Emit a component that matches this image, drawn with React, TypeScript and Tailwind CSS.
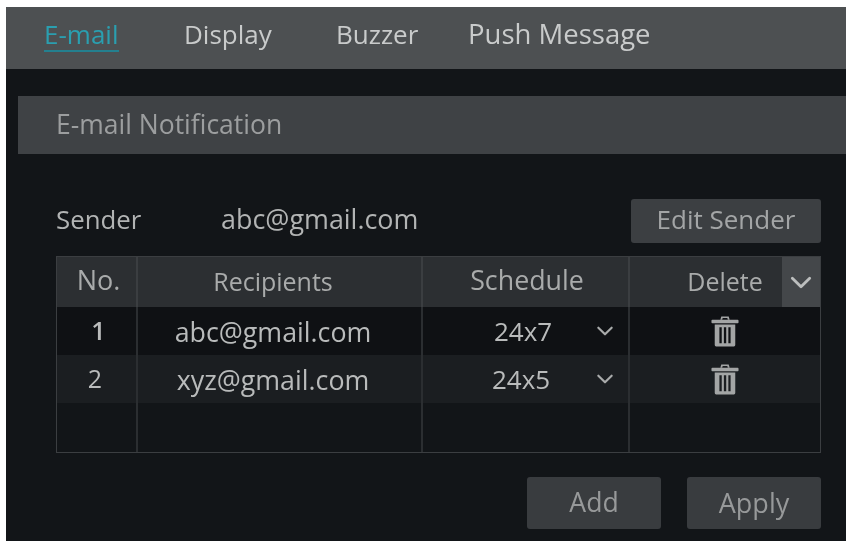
const font = { fontFamily: '"Open Sans", "Noto Sans", sans-serif' };

function Chevron({ className }: { className: string }) {
  return (
    <svg viewBox="0 0 20 12" className={className} fill="none" stroke="currentColor" strokeWidth="2.6" strokeLinecap="round" strokeLinejoin="round">
      <path d="M2 2 L10 10 L18 2" />
    </svg>
  );
}

function Trash() {
  return (
    <svg viewBox="0 0 30 34" className="w-[28px] h-[32px] text-[#a3a5a5]" fill="currentColor">
      <path d="M10 5 L11 1.5 H19 L20 5 H18 L17.5 3.2 H12.5 L12 5 Z" />
      <rect x="0.5" y="5" width="29" height="3.6" rx="1" />
      <path fillRule="evenodd" d="M4 10 H26 V32 Q26 33.5 24.5 33.5 H5.5 Q4 33.5 4 32 Z M9 13 V30 H11.5 V13 Z M13.8 13 V30 H16.3 V13 Z M18.6 13 V30 H21 V13 Z" />
    </svg>
  );
}

const rows = [
  { n: "1", mail: "abc@gmail.com", sch: "24x7", bg: "bg-[#0f1114]", pl: "pl-[71px]", w: "w-[102px]", num: "font-semibold pl-1" },
  { n: "2", mail: "xyz@gmail.com", sch: "24x5", bg: "bg-[#1b1e21]", pl: "pl-[69px]", w: "w-[104px]", num: "pr-[3px]" },
];

export default function App() {
  return (
    <div className="w-[848px] h-[542px] bg-white pt-[7px] pl-[6px] pr-[2px] pb-px overflow-hidden blur-[0.5px]" style={font}>
      <div className="h-full flex flex-col bg-[#121518]">
        <div className="h-[62px] shrink-0 bg-[#4d5052] flex items-center pb-2 text-[26px] text-[#c9cbcb]">
          <div className="ml-[38px] w-[140px] relative">
            <span className="text-[#2a9fb0]">E-mail</span>
            <div className="absolute left-0 top-[35px] h-[2px] w-[75px] bg-[#24808f]" />
          </div>
          <span className="w-[152px]">Display</span>
          <span className="w-[132px]">Buzzer</span>
          <span className="text-[27.5px]">Push Message</span>
        </div>

        <div className="mt-[27px] ml-3 h-[58px] shrink-0 bg-[#3f4245] flex items-center pl-[38px] text-[26.5px] text-[#9c9e9f]">
          E-mail Notification
        </div>

        <div className="mt-[45px] ml-[50px] mr-[25px] h-11 shrink-0 flex items-center justify-between">
          <div className="flex items-center pb-[3px] text-[#b2b4b4]">
            <span className="w-[165px] text-[25.8px]">Sender</span>
            <span className="text-[26.9px]">abc@gmail.com</span>
          </div>
          <button className="w-[190px] h-11 pb-[3px] rounded-[3px] bg-[#3c3f42] text-[26px] text-[#a3a5a6]">Edit Sender</button>
        </div>

        <div className="mt-[13px] ml-[50px] mr-[25px] h-[197px] shrink-0 border border-[#3b3e41] flex flex-col">
          <div className="h-[50px] shrink-0 bg-[#2c2f32] grid grid-cols-[81px_285px_207px_1fr] items-stretch text-[#a9abab]">
            <div className="border-r-2 border-[#3b3e41] flex items-center justify-center text-[27px] pb-1 pl-1">No.</div>
            <div className="border-r-2 border-[#3b3e41] flex items-center justify-center text-[25px] pr-[13px]">Recipients</div>
            <div className="border-r-2 border-[#3b3e41] flex items-center justify-center text-[26.8px] pb-1 pl-[3px]">Schedule</div>
            <div className="flex items-stretch relative">
              <div className="flex-1 flex items-center justify-center text-[25px]">Delete</div>
              <div className="absolute right-0 top-0 bottom-0 w-[38px] bg-[#44474a] flex items-center justify-center text-[#bcbebe]">
                <Chevron className="w-[22px] h-[13px]" />
              </div>
            </div>
          </div>
          {rows.map((r) => (
            <div key={r.n} className={`h-[48px] shrink-0 grid grid-cols-[81px_285px_207px_1fr] items-stretch text-[#b9bbbb] ${r.bg}`}>
              <div className={`border-r-2 border-[#2b2e31] flex items-center justify-center text-[25px] ${r.num}`}>{r.n}</div>
              <div className="border-r-2 border-[#2b2e31] flex items-center justify-center pt-[3px] pr-[13px] text-[26.8px]">{r.mail}</div>
              <div className={`border-r-2 border-[#2b2e31] flex items-center text-[26px] ${r.pl}`}>
                <span className={`${r.w} pt-px`}>{r.sch}</span>
                <Chevron className="w-[18px] h-[10px] text-[#a9abab]" />
              </div>
              <div className="flex items-center justify-center">
                <Trash />
              </div>
            </div>
          ))}
          <div className="flex-1 grid grid-cols-[81px_285px_207px_1fr]">
            <div className="border-r-2 border-[#2b2e31]" />
            <div className="border-r-2 border-[#2b2e31]" />
            <div className="border-r-2 border-[#2b2e31]" />
            <div />
          </div>
        </div>

        <div className="mt-6 mr-[25px] flex justify-end gap-[26px]">
          <button className="w-[134px] h-[52px] rounded-[3px] bg-[#393c3f] text-[26.6px] text-[#97999a]">Add</button>
          <button className="w-[134px] h-[52px] rounded-[3px] bg-[#393c3f] text-[27px] text-[#97999a]">Apply</button>
        </div>
      </div>
    </div>
  );
}
